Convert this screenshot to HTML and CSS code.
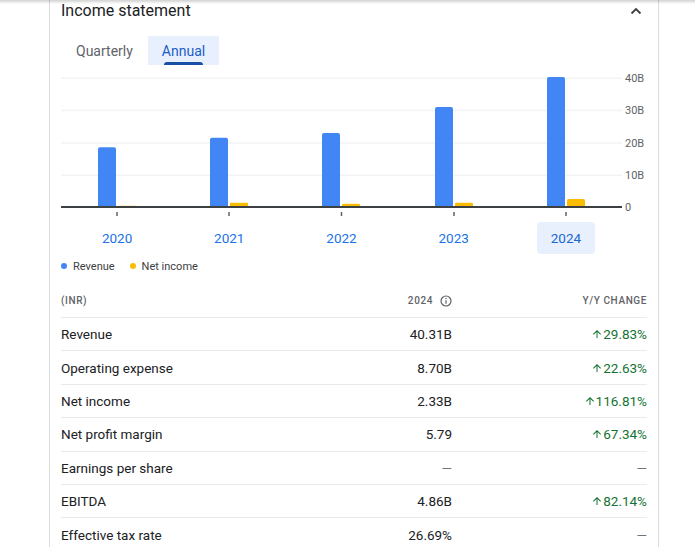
FILE: index.html
```html
<!DOCTYPE html>
<html lang="en">
<head>
<meta charset="utf-8">
<title>Income statement</title>
<link rel="stylesheet" href="styles.css">
</head>
<body>
<div class="topshade"></div>
<main class="page">
  <section class="card">
    <header class="head">
      <h2 class="title">Income statement</h2>
      <svg class="chev" width="12" height="8" viewBox="0 0 12 8"><path d="M1.5 6.5 L6 2 L10.5 6.5" fill="none" stroke="#3c4043" stroke-width="1.8"/></svg>
    </header>
    <nav class="tabs">
      <span class="tab">Quarterly</span>
      <span class="tab active">Annual</span>
    </nav>
    <svg class="chart" width="586" height="155" viewBox="0 0 586 155">
      <g stroke="#f1f3f4" stroke-width="1.5">
        <line x1="0" y1="13.3" x2="561" y2="13.3"/>
        <line x1="0" y1="45.6" x2="561" y2="45.6"/>
        <line x1="0" y1="78" x2="561" y2="78"/>
        <line x1="0" y1="110.3" x2="561" y2="110.3"/>
      </g>
      <g fill="#4285f4">
        <path d="M37 142 V84.3 Q37 82.3 39 82.3 H53 Q55 82.3 55 84.3 V142 Z"/>
        <path d="M149 142 V74.7 Q149 72.7 151 72.7 H165 Q167 72.7 167 74.7 V142 Z"/>
        <path d="M261 142 V70 Q261 68 263 68 H277 Q279 68 279 70 V142 Z"/>
        <path d="M374 142 V44 Q374 42 376 42 H390 Q392 42 392 44 V142 Z"/>
        <path d="M486 142 V14 Q486 12 488 12 H502 Q504 12 504 14 V142 Z"/>
      </g>
      <g fill="#fbbc04">
        <rect x="57" y="140.8" width="18" height="1.2"/>
        <path d="M169 142 V138.7 Q169 137.7 170 137.7 H186 Q187 137.7 187 138.7 V142 Z"/>
        <path d="M281 142 V139.7 Q281 138.7 282 138.7 H298 Q299 138.7 299 139.7 V142 Z"/>
        <path d="M394 142 V138.7 Q394 137.7 395 137.7 H411 Q412 137.7 412 138.7 V142 Z"/>
        <path d="M506 142 V135.5 Q506 134 507.5 134 H522.5 Q524 134 524 135.5 V142 Z"/>
      </g>
      <rect x="0" y="141" width="561" height="2" fill="#3c4043"/>
      <g stroke="#5f6368" stroke-width="1.5">
        <line x1="56" y1="147" x2="56" y2="151"/>
        <line x1="168" y1="147" x2="168" y2="151"/>
        <line x1="280.5" y1="147" x2="280.5" y2="151"/>
        <line x1="393" y1="147" x2="393" y2="151"/>
        <line x1="505" y1="147" x2="505" y2="151"/>
      </g>
      <g class="axis" fill="#5f6368" font-size="11" dominant-baseline="central">
        <text x="564" y="13.3">40B</text>
        <text x="564" y="45.6">30B</text>
        <text x="564" y="78">20B</text>
        <text x="564" y="110.3">10B</text>
        <text x="564" y="142">0</text>
      </g>
    </svg>
    <div class="years">
      <span class="year">2020</span>
      <span class="year">2021</span>
      <span class="year">2022</span>
      <span class="year">2023</span>
      <span class="year sel">2024</span>
    </div>
    <div class="legend">
      <span class="item"><i class="dot blue"></i>Revenue</span>
      <span class="item"><i class="dot yellow"></i>Net income</span>
    </div>
    <div class="table">
      <div class="row hdr">
        <span>(INR)</span>
        <span class="v">2024<svg class="info" width="12" height="12" viewBox="0 0 12 12"><circle cx="6" cy="6" r="5" fill="none" stroke="#5f6368" stroke-width="1.2"/><line x1="6" y1="5.2" x2="6" y2="8.8" stroke="#5f6368" stroke-width="1.2"/><circle cx="6" cy="3.5" r="0.75" fill="#5f6368"/></svg></span>
        <span class="c">Y/Y CHANGE</span>
      </div>
      <div class="row">
        <span>Revenue</span>
        <span class="v">40.31B</span>
        <span class="c up"><svg class="arrow" width="12" height="12" viewBox="0 0 24 24"><path d="M4 12l1.41 1.41L11 7.83V20h2V7.83l5.58 5.59L20 12l-8-8-8 8z" fill="#137333"/></svg>29.83%</span>
      </div>
      <div class="row">
        <span>Operating expense</span>
        <span class="v">8.70B</span>
        <span class="c up"><svg class="arrow" width="12" height="12" viewBox="0 0 24 24"><path d="M4 12l1.41 1.41L11 7.83V20h2V7.83l5.58 5.59L20 12l-8-8-8 8z" fill="#137333"/></svg>22.63%</span>
      </div>
      <div class="row">
        <span>Net income</span>
        <span class="v">2.33B</span>
        <span class="c up"><svg class="arrow" width="12" height="12" viewBox="0 0 24 24"><path d="M4 12l1.41 1.41L11 7.83V20h2V7.83l5.58 5.59L20 12l-8-8-8 8z" fill="#137333"/></svg>116.81%</span>
      </div>
      <div class="row">
        <span>Net profit margin</span>
        <span class="v">5.79</span>
        <span class="c up"><svg class="arrow" width="12" height="12" viewBox="0 0 24 24"><path d="M4 12l1.41 1.41L11 7.83V20h2V7.83l5.58 5.59L20 12l-8-8-8 8z" fill="#137333"/></svg>67.34%</span>
      </div>
      <div class="row">
        <span>Earnings per share</span>
        <span class="v dash">—</span>
        <span class="c dash">—</span>
      </div>
      <div class="row">
        <span>EBITDA</span>
        <span class="v">4.86B</span>
        <span class="c up"><svg class="arrow" width="12" height="12" viewBox="0 0 24 24"><path d="M4 12l1.41 1.41L11 7.83V20h2V7.83l5.58 5.59L20 12l-8-8-8 8z" fill="#137333"/></svg>82.14%</span>
      </div>
      <div class="row">
        <span>Effective tax rate</span>
        <span class="v">26.69%</span>
        <span class="c dash">—</span>
      </div>
    </div>
  </section>
</main>
</body>
</html>
```

FILE: styles.css
```css
html, body {
  margin: 0;
  background: #fff;
}

body {
  font-family: Roboto, "Liberation Sans", Arial, sans-serif;
  color: #202124;
  overflow: hidden;
}

.topshade {
  position: fixed;
  top: 0;
  left: 0;
  right: 0;
  height: 4px;
  background: linear-gradient(rgba(0, 0, 0, 0.18), rgba(0, 0, 0, 0));
  z-index: 2;
}

.page {
  padding-left: 49px;
}

.card {
  width: 586px;
  padding: 0 11px;
  border-left: 1px solid #dadce0;
  border-right: 1px solid #dadce0;
  min-height: 560px;
}

.head {
  display: flex;
  justify-content: space-between;
  align-items: center;
  height: 21px;
}

.title {
  margin: 0;
  font-size: 16px;
  font-weight: 400;
  line-height: 21px;
  color: #202124;
}

.chev {
  display: block;
  margin-right: 5px;
}

.tabs {
  display: flex;
  height: 29px;
  margin-top: 15px;
}

.tab {
  position: relative;
  display: flex;
  align-items: center;
  padding: 0 15px;
  font-size: 14px;
  font-weight: 400;
  color: #5f6368;
}

.tab.active {
  padding: 0 14px;
  background: #e8f0fe;
  color: #1a5dc8;
}

.tab.active::after {
  content: "";
  position: absolute;
  left: 16px;
  right: 16px;
  bottom: 0;
  height: 3px;
  border-radius: 3px 3px 0 0;
  background: #174ea6;
}

.chart {
  display: block;
  font-family: Roboto, "Liberation Sans", Arial, sans-serif;
}

.years {
  display: grid;
  grid-template-columns: repeat(5, 1fr);
  width: 561px;
  margin-top: 2px;
}

.year {
  justify-self: center;
  display: flex;
  align-items: center;
  height: 32px;
  padding: 0 14px;
  border-radius: 4px;
  font-size: 13.5px;
  font-weight: 400;
  color: #1a73e8;
}

.year.sel {
  background: #e8f0fe;
  color: #1967d2;
}

.legend {
  display: flex;
  align-items: center;
  height: 14px;
  margin-top: 5px;
  font-size: 11px;
  color: #3c4043;
}

.legend .item {
  display: flex;
  align-items: center;
  gap: 6px;
  margin-right: 15px;
}

.dot {
  display: block;
  width: 6px;
  height: 6px;
  border-radius: 50%;
}

.dot.blue { background: #4285f4; }
.dot.yellow { background: #fbbc04; }

.table {
  margin-top: 11px;
}

.row {
  display: grid;
  grid-template-columns: 1fr 120px 195px;
  align-items: center;
  box-sizing: border-box;
  height: 33.4px;
  font-size: 13.5px;
  font-weight: 400;
  color: #202124;
}

.row + .row {
  border-top: 1px solid #e8eaed;
}

.row.hdr {
  height: 33px;
  font-size: 10px;
  font-weight: 500;
  color: #5f6368;
  letter-spacing: 0.6px;
}

.v, .c {
  justify-self: end;
  display: flex;
  align-items: center;
}

.info {
  display: block;
  margin-left: 7px;
}

.up {
  color: #137333;
}

.arrow {
  display: block;
}

.dash {
  color: #70757a;
}
```
